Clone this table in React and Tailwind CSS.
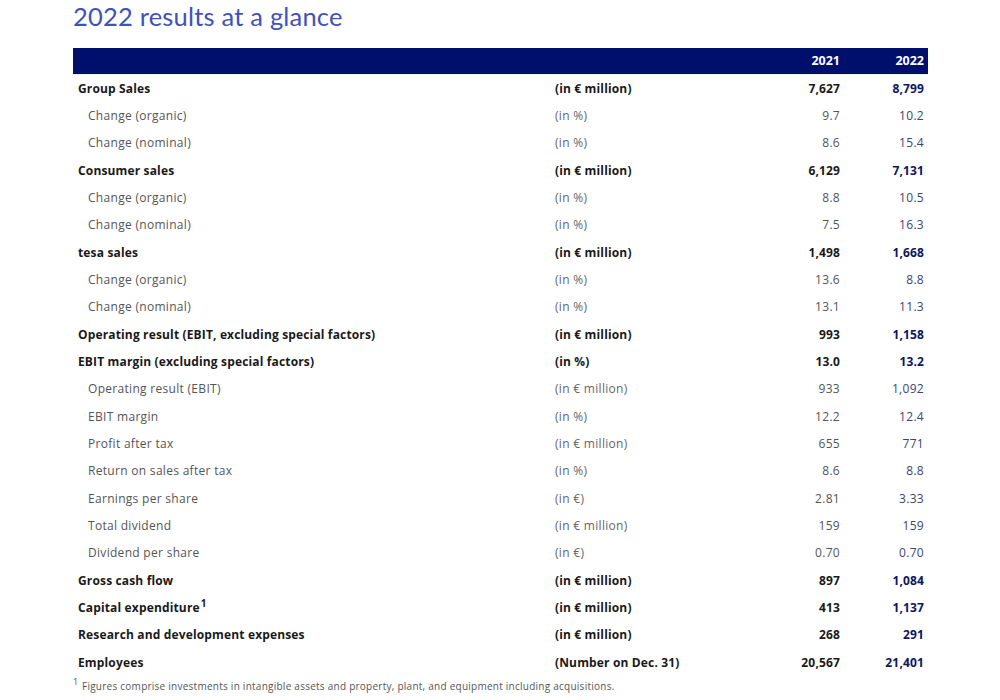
const rows = [
  ["Group Sales", "(in € million)", "7,627", "8,799", true],
  ["Change (organic)", "(in %)", "9.7", "10.2", false],
  ["Change (nominal)", "(in %)", "8.6", "15.4", false],
  ["Consumer sales", "(in € million)", "6,129", "7,131", true],
  ["Change (organic)", "(in %)", "8.8", "10.5", false],
  ["Change (nominal)", "(in %)", "7.5", "16.3", false],
  ["tesa sales", "(in € million)", "1,498", "1,668", true],
  ["Change (organic)", "(in %)", "13.6", "8.8", false],
  ["Change (nominal)", "(in %)", "13.1", "11.3", false],
  ["Operating result (EBIT, excluding special factors)", "(in € million)", "993", "1,158", true],
  ["EBIT margin (excluding special factors)", "(in %)", "13.0", "13.2", true],
  ["Operating result (EBIT)", "(in € million)", "933", "1,092", false],
  ["EBIT margin", "(in %)", "12.2", "12.4", false],
  ["Profit after tax", "(in € million)", "655", "771", false],
  ["Return on sales after tax", "(in %)", "8.6", "8.8", false],
  ["Earnings per share", "(in €)", "2.81", "3.33", false],
  ["Total dividend", "(in € million)", "159", "159", false],
  ["Dividend per share", "(in €)", "0.70", "0.70", false],
  ["Gross cash flow", "(in € million)", "897", "1,084", true],
  ["Capital expenditure", "(in € million)", "413", "1,137", true, true],
  ["Research and development expenses", "(in € million)", "268", "291", true],
  ["Employees", "(Number on Dec. 31)", "20,567", "21,401", true],
];

export default function App() {
  return (
    <div className="w-[1000px] h-[700px] bg-white overflow-hidden" style={{ fontFamily: "'Open Sans', Lato, sans-serif" }}>
      <div className="ml-[73px] w-[855px]">
        <h1 className="h-[48px] pt-[1px] text-[25.5px] leading-[30px] text-[#3f52b8] tracking-[0.2px]" style={{ fontFamily: "Lato, sans-serif" }}>2022 results at a glance</h1>
        <div className="grid grid-cols-[482px_205px_80px_88px] h-[26px] bg-[#000f6b] items-center text-white font-bold text-[12.5px]">
          <div></div>
          <div></div>
          <div className="text-right">2021</div>
          <div className="text-right pr-[4px]">2022</div>
        </div>
        <div className="h-[1px] bg-[#eef0f3]"></div>
        {rows.map(([label, unit, a, b, bold, sup], i) => (
          <div key={i} className={`grid grid-cols-[482px_205px_80px_88px] h-[27.33px] items-center pt-[2px] text-[12px] ${i === 0 ? "-mt-[1px]" : ""} ${bold ? "tracking-[0.15px]" : "tracking-[0.3px]"}`}>
            <div className={bold ? "pl-[5px] font-bold text-[#1a1a1a]" : "pl-[15px] text-[#555]"}>
              {label}
              {sup && <span className="text-[10px] font-bold relative -top-[5px] ml-[1px]">1</span>}
            </div>
            <div className={bold ? "font-bold text-[#1a1a1a]" : "text-[#666]"}>{unit}</div>
            <div className={`text-right ${bold ? "font-bold text-[#1a1a1a]" : "text-[#555]"}`}>{a}</div>
            <div className={`text-right pr-[4px] ${bold ? "font-bold text-[#0d1660]" : "text-[#3d4470]"}`}>{b}</div>
          </div>
        ))}
        <div className="mt-[4px] text-[10px] text-[#555] leading-[14px] tracking-[0.25px] flex">
          <span className="text-[9px] w-[9px] relative -top-[4px]">1</span>Figures comprise investments in intangible assets and property, plant, and equipment including acquisitions.
        </div>
      </div>
    </div>
  );
}
